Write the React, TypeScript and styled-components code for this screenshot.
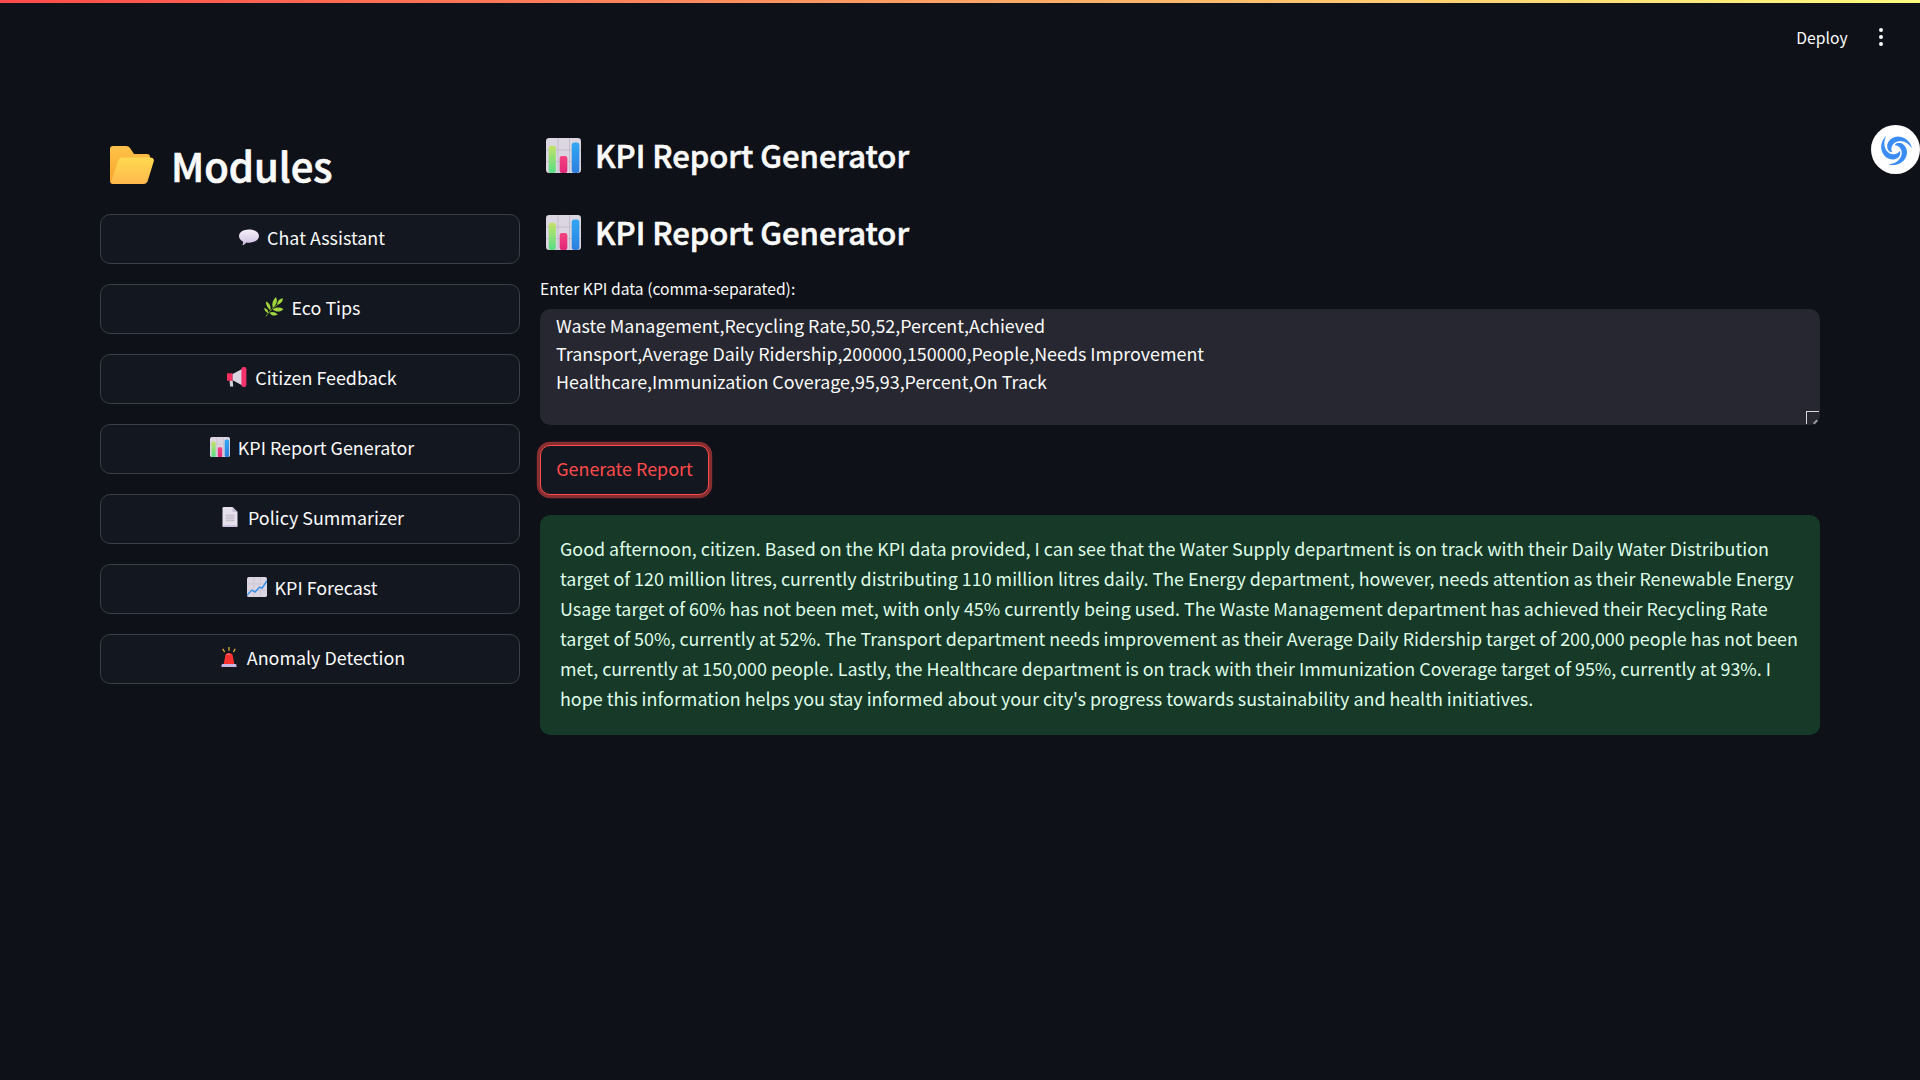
import React from "react";
import styled, { createGlobalStyle } from "styled-components";

const FONT = `"Noto Sans CJK SC", "Noto Sans", sans-serif`;

const Global = createGlobalStyle`
  html, body { margin: 0; padding: 0; background: #0e1117; }
  body { font-family: ${FONT}; color: #fafafa; }
`;

const Page = styled.div`
  position: relative;
  width: 1920px;
  height: 1080px;
  overflow: hidden;
  background: #0e1117;
`;
const TopLine = styled.div`
  height: 3px;
  background: linear-gradient(90deg, #ff4b4b, #fffd80);
`;
const Header = styled.header`
  box-sizing: border-box;
  height: 73px;
  display: flex;
  justify-content: flex-end;
  align-items: center;
  gap: 31px;
  padding: 0 37px 5px 0;
  font-size: 15.7px;
`;
const Kebab = styled.div`
  display: flex;
  flex-direction: column;
  gap: 2.4px;
  span { width: 4.4px; height: 4.4px; border-radius: 50%; background: #fafafa; display: block; }
`;
const Columns = styled.main`
  display: grid;
  grid-template-columns: 420px 1280px;
  gap: 20px;
  padding: 0 100px;
`;
const Side = styled.aside`
  display: flex;
  flex-direction: column;
`;
const ModulesTitle = styled.h2`
  display: flex;
  align-items: center;
  gap: 17px;
  height: 60px;
  margin: 59px 0 19px;
  padding-left: 10px;
  font-size: 40px;
  font-weight: 500;
  -webkit-text-stroke: 0.7px #fafafa;
  line-height: 60px;
`;
const NavList = styled.nav`
  display: flex;
  flex-direction: column;
  gap: 20px;
`;
const NavButton = styled.button`
  height: 50px;
  box-sizing: border-box;
  display: flex;
  align-items: center;
  justify-content: center;
  gap: 8px;
  padding: 0 0 4px 4px;
  background: #131720;
  border: 1px solid #3b3e48;
  border-radius: 10px;
  color: #fafafa;
  font: 400 17.9px/28px ${FONT};
  svg { width: 20px; height: 20px; }
`;
const Content = styled.section`
  display: flex;
  flex-direction: column;
`;
const Heading = styled.h1`
  display: flex;
  align-items: center;
  gap: 14px;
  height: 52px;
  margin: 0 0 25px;
  padding-left: 6px;
  font-size: 31px;
  font-weight: 500;
  -webkit-text-stroke: 0.6px #fafafa;
  line-height: 52px;
  &:first-child { margin-top: 53px; }
  svg { width: 35px; height: 35px; }
`;
const FieldLabel = styled.label`
  font-size: 15.7px;
  line-height: 22px;
  margin-top: -5px;
  margin-bottom: 9px;
  display: block;
`;
const TextBox = styled.div`
  position: relative;
  box-sizing: border-box;
  height: 116px;
  background: #262730;
  border-radius: 10px;
  padding: 2px 16px;
  font-size: 17.9px;
  line-height: 28px;
  white-space: pre;
`;
const Grip = styled.span`
  position: absolute;
  right: 1px;
  bottom: 1px;
  width: 13px;
  height: 13px;
  border-top: 1px solid #d8d8dc;
  border-left: 1px solid #d8d8dc;
  box-sizing: border-box;
  &::after {
    content: "";
    position: absolute;
    right: 1px;
    bottom: 1px;
    width: 5px;
    height: 2px;
    background: #9a9aa0;
    transform: rotate(-45deg);
  }
`;
const Generate = styled.button`
  align-self: flex-start;
  box-sizing: border-box;
  height: 50px;
  width: 169px;
  margin: 20px 0;
  background: #131720;
  border: 1px solid #ff4b4b;
  border-radius: 10px;
  box-shadow: 0 0 0 3.2px rgba(255, 75, 75, 0.5);
  color: #ff4b4b;
  font: 400 17.9px/28px ${FONT};
  padding: 0 0 5px;
`;
const Alert = styled.div`
  box-sizing: border-box;
  height: 220px;
  background: #173928;
  border-radius: 10px;
  padding: 18px 20px;
  color: #dffde9;
  font-size: 17.9px;
  line-height: 30px;
`;
const Floating = styled.div`
  position: absolute;
  left: 1871px;
  top: 125px;
  width: 49px;
  height: 49px;
  border-radius: 50%;
  background: #fff;
  display: flex;
  align-items: center;
  justify-content: center;
`;

const Bubble = () => (
  <svg viewBox="0 0 32 32"><defs><linearGradient id="bb" x1="0" y1="0" x2="0" y2="1"><stop offset="0" stopColor="#f6f1fa"/><stop offset="1" stopColor="#cdbfe0"/></linearGradient></defs>
    <path d="M16 4c9 0 16 4.400 16 10.500S25 25 16 25c-1.500 0-3-.1-4.500-.4C10 27 8 28.500 5.500 29c.8-1.500 1.200-3.500 1-5.600C2.500 21.500 0 18.200 0 14.500 0 8.400 7 4 16 4z" fill="url(#bb)"/></svg>
);
const Herb = () => (
  <svg viewBox="0 0 32 32" fill="#a2d63c">
    <path d="M3 31C8 24 14 17 25 10" stroke="#7fae2e" strokeWidth="1.500" fill="none"/>
    <path d="M14 17C12 11 14 5 19 0c3 5 2 12-5 17z"/><path d="M21 12c0-5 3-9 9-10 .5 5-3 9-9 10z"/>
    <path d="M10 21C6 18 3 13 3 7c5 2 9 7 7 14z"/><path d="M14 20c5-4 11-4 17-1-4 5-11 6-17 1z"/><path d="M7 26c-3-1-6-4-7-8 5 0 7 4 7 8z"/><path d="M9 25c4-2 9-1 13 3-5 3-10 2-13-3z"/>
  </svg>
);
const Megaphone = () => (
  <svg viewBox="0 0 32 32">
    <path d="M4 21h5l1 10H5z" fill="#d3cfd8"/>
    <rect x="0" y="10" width="9" height="12" rx="1" fill="#f92f60"/>
    <path d="M9 11l15-8v26L9 21z" fill="#dcd6e2"/>
    <rect x="23" y="0" width="8" height="32" rx="3.500" fill="#f4336e"/>
  </svg>
);
const Chart = () => (
  <svg viewBox="0 0 32 32">
    <defs>
      <linearGradient id="g1" x1="0" y1="0" x2="0" y2="1"><stop offset="0" stopColor="#c4e264"/><stop offset="1" stopColor="#58dd88"/></linearGradient>
      <linearGradient id="g2" x1="0" y1="0" x2="0" y2="1"><stop offset="0" stopColor="#f4457f"/><stop offset="1" stopColor="#e0277a"/></linearGradient>
      <linearGradient id="g3" x1="0" y1="0" x2="0" y2="1"><stop offset="0" stopColor="#31a8f5"/><stop offset="1" stopColor="#2c7fdd"/></linearGradient>
    </defs>
    <rect x="0" y="0" width="32" height="32" rx="3" fill="#dcd6e2"/>
    <path d="M11 0v32M21.500 0v32M0 11h32M0 21.500h32" stroke="#bdb6c8" strokeWidth="0.700"/>
    <rect x="2.500" y="7" width="6.500" height="25" rx="2" fill="url(#g1)"/>
    <rect x="12.500" y="16.500" width="7" height="15.500" rx="2" fill="url(#g2)"/>
    <rect x="23.500" y="4" width="7" height="28" rx="2.500" fill="url(#g3)"/>
  </svg>
);
const Doc = () => (
  <svg viewBox="0 0 32 32">
    <path d="M4 2a2 2 0 0 1 2-2h14l8 8v22a2 2 0 0 1-2 2H6a2 2 0 0 1-2-2z" fill="#e6e0ec"/><path d="M20 0l8 8h-6a2 2 0 0 1-2-2z" fill="#c6bcd6"/>
    <path d="M9 13h14M9 16h14M9 19h14M9 22h14" stroke="#a39bb0" strokeWidth="1"/>
    <path d="M4 29h24v1a2 2 0 0 1-2 2H6a2 2 0 0 1-2-2z" fill="#cabfdc"/>
  </svg>
);
const Trend = () => (
  <svg viewBox="0 0 32 32">
    <rect x="0" y="0" width="32" height="32" rx="3" fill="#dcd6e2"/>
    <path d="M11 0v32M21.500 0v32M0 11h32M0 21.500h32" stroke="#bdb6c8" strokeWidth="0.700"/>
    <path d="M0 29l8-8 5 3 7-8 4 2 8-12" fill="none" stroke="#2f8ee8" strokeWidth="2.200"/>
  </svg>
);
const Siren = () => (
  <svg viewBox="0 0 32 32">
    <path d="M16 0v6M6 3l3 5M26 3l-3 5" stroke="#f3c13a" strokeWidth="1.800" fill="none"/>
    <path d="M10 14c0-6 12-6 12 0l2.500 13h-17z" fill="#f8312f"/>
    <path d="M12 13c1-2 4-2 5-1" stroke="#ff8a9a" strokeWidth="1.500" fill="none"/>
    <path d="M6 27h20c1.500 0 2 1 2 2.500V32H4v-2.500C4 28 4.500 27 6 27z" fill="#c6b6e0"/>
  </svg>
);
const Folder = () => (
  <svg width="44" height="38" viewBox="0 0 44 38" style={{ flex: "none" }}>
    <defs>
      <linearGradient id="fb" x1="0" y1="0" x2="0" y2="1"><stop offset="0" stopColor="#ffc24a"/><stop offset="1" stopColor="#f9a32a"/></linearGradient>
      <linearGradient id="ff" x1="0" y1="0" x2="0" y2="1"><stop offset="0" stopColor="#ffd950"/><stop offset="1" stopColor="#ffb84d"/></linearGradient>
    </defs>
    <path d="M0 3a3 3 0 0 1 3-3h13c2 0 3 .7 4 2l4 6h13a3 3 0 0 1 3 3v6L6 38H3a3 3 0 0 1-3-3z" fill="url(#fb)"/>
    <path d="M2 37.500C1 37 1 36 1.500 34.500L8 15c.8-2.500 2-3.500 4.500-3.500h28c2.500 0 3.800 1.500 3.200 4L38 34c-.7 2.500-2 4-4.500 4H3z" fill="url(#ff)"/>
  </svg>
);

// One arm of the swirl: a tapered band spiralling out from the hub.
const armPath = (() => {
  const steps = 32;
  const outer: string[] = [];
  const inner: string[] = [];
  for (let i = 0; i <= steps; i++) {
    const t = i / steps;
    const a = (-100 + 215 * t) * (Math.PI / 180);
    const ro = 4 + 12 * Math.pow(t, 0.75);
    const ri = ro - 5.5 * Math.pow(Math.sin(Math.PI * t), 0.8);
    outer.push(`${(16 + ro * Math.cos(a)).toFixed(2)} ${(16 + ro * Math.sin(a)).toFixed(2)}`);
    inner.unshift(`${(16 + ri * Math.cos(a)).toFixed(2)} ${(16 + ri * Math.sin(a)).toFixed(2)}`);
  }
  return `M${outer.concat(inner).join("L")}Z`;
})();
const Swirl = () => (
  <svg width="33" height="33" viewBox="0 0 32 32" fill="#3b8cf5">
    <path d={armPath} />
    <path d={armPath} transform="rotate(120 16 16)" />
    <path d={armPath} transform="rotate(240 16 16)" />
  </svg>
);

const items: [string, React.ComponentType][] = [
  ["Chat Assistant", Bubble],
  ["Eco Tips", Herb],
  ["Citizen Feedback", Megaphone],
  ["KPI Report Generator", Chart],
  ["Policy Summarizer", Doc],
  ["KPI Forecast", Trend],
  ["Anomaly Detection", Siren],
];

export default function App() {
  return (
    <Page>
      <Global />
      <TopLine />
      <Header>
        <span>Deploy</span>
        <Kebab><span /><span /><span /></Kebab>
      </Header>
      <Columns>
        <Side>
          <ModulesTitle><Folder />Modules</ModulesTitle>
          <NavList>
            {items.map(([label, Icon]) => (
              <NavButton key={label}><Icon />{label}</NavButton>
            ))}
          </NavList>
        </Side>
        <Content>
          <Heading><Chart />KPI Report Generator</Heading>
          <Heading><Chart />KPI Report Generator</Heading>
          <FieldLabel>Enter KPI data (comma-separated):</FieldLabel>
          <TextBox>
            {"Waste Management,Recycling Rate,50,52,Percent,Achieved\nTransport,Average Daily Ridership,200000,150000,People,Needs Improvement\nHealthcare,Immunization Coverage,95,93,Percent,On Track"}
            <Grip />
          </TextBox>
          <Generate>Generate Report</Generate>
          <Alert>
            Good afternoon, citizen. Based on the KPI data provided, I can see that the Water Supply department is on track with their Daily Water Distribution target of 120 million litres, currently distributing 110 million litres daily. The Energy department, however, needs attention as their Renewable Energy Usage target of 60% has not been met, with only 45% currently being used. The Waste Management department has achieved their Recycling Rate target of 50%, currently at 52%. The Transport department needs improvement as their Average Daily Ridership target of 200,000 people has not been met, currently at 150,000 people. Lastly, the Healthcare department is on track with their Immunization Coverage target of 95%, currently at 93%. I hope this information helps you stay informed about your city's progress towards sustainability and health initiatives.
          </Alert>
        </Content>
      </Columns>
      <Floating><Swirl /></Floating>
    </Page>
  );
}
